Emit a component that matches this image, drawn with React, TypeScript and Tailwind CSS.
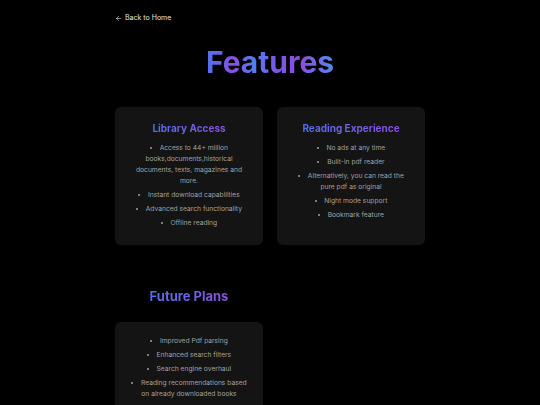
import React from 'react';
import { ArrowLeft } from 'lucide-react';

const library = [
  'Access to 44+ million books,documents,historical documents, texts, magazines and more.',
  'Instant download capabilities',
  'Advanced search functionality',
  'Offline reading',
];

const reading = [
  'No ads at any time',
  'Built-in pdf reader',
  'Alternatively, you can read the pure pdf as original',
  'Night mode support',
  'Bookmark feature',
];

const future = [
  'Improved Pdf parsing',
  'Enhanced search filters',
  'Search engine overhaul',
  'Reading recommendations based on already downloaded books',
];

function BulletList({ items }: { items: string[] }) {
  return (
    <ul className="flex flex-col gap-[3px] list-disc list-inside text-center text-[6.7px] leading-[11px] text-neutral-400">
      {items.map((item) => (
        <li key={item}>{item}</li>
      ))}
    </ul>
  );
}

function Card({ title, items, tall }: { title?: string; items: string[]; tall?: boolean }) {
  return (
    <div className={`rounded-[6px] bg-[#141414] px-[16px] pt-[14px] ${tall ? 'pb-[40px]' : 'pb-[16px]'}`}>
      {title && (
        <h3 className="mb-[8px] text-center text-[10px] leading-[14px] font-bold">
          <span className="bg-gradient-to-r from-[#4f6ff0] to-[#8b4fe0] bg-clip-text text-transparent">
            {title}
          </span>
        </h3>
      )}
      <BulletList items={items} />
    </div>
  );
}

export default function App() {
  return (
    <div className="min-h-screen bg-black font-['Inter',sans-serif]">
      <div className="mx-auto w-[310px] pt-[12px]">
        <a href="#" className="flex items-center gap-[3px] text-[7px] leading-[12px] text-neutral-200">
          <ArrowLeft size={7} strokeWidth={2} />
          Back to Home
        </a>

        <h1 className="mt-[20px] text-center text-[30px] leading-[36px] font-bold">
          <span className="bg-[linear-gradient(90deg,#4f73f2_0%,#8a4fe2_22%,#4f7ff2_38%,#7d55e8_55%,#8a4fe2_75%,#4f8af2_100%)] bg-clip-text text-transparent">
            Features
          </span>
        </h1>

        <div className="mt-[27px] grid grid-cols-2 gap-[14px]">
          <Card title="Library Access" items={library} />
          <Card title="Reading Experience" items={reading} />
        </div>

        <div className="mt-[41px] grid grid-cols-2 gap-[14px]">
          <div>
            <h2 className="mb-[16px] text-center text-[13px] leading-[20px] font-bold">
              <span className="bg-gradient-to-r from-[#4f6ff0] to-[#8b4fe0] bg-clip-text text-transparent">
                Future Plans
              </span>
            </h2>
            <Card items={future} tall />
          </div>
        </div>
      </div>
    </div>
  );
}
